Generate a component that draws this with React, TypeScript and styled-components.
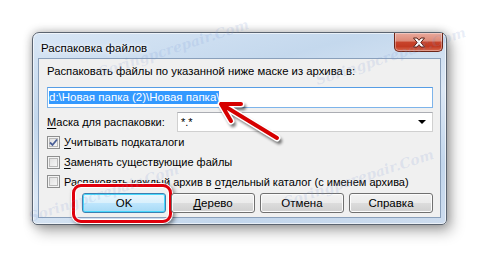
import React from 'react';
import styled, { createGlobalStyle } from 'styled-components';

const Global = createGlobalStyle`
  html, body { margin: 0; padding: 0; background: #ffffff; }
  body {
    width: 480px; height: 258px; overflow: hidden;
    font-family: "Liberation Sans", Arial, sans-serif;
    font-size: 11px; color: #000;
  }
`;

const Stage = styled.div`
  position: relative;
  width: 480px;
  height: 258px;
  box-sizing: border-box;
  padding: 32px 33px 33px 32px;
  overflow: hidden;
`;

const Window = styled.div`
  position: relative;
  width: 415px;
  height: 193px;
  box-sizing: border-box;
  display: flex;
  flex-direction: column;
  border: 1px solid #5b6470;
  border-radius: 7px 7px 5px 5px;
  background: linear-gradient(165deg, #d8e6f5 0%, #c4d8ed 30%, #dce8f5 55%, #c2d6ec 80%, #cddcee 100%);
  box-shadow: 0 0 10px rgba(0, 0, 0, 0.3), 5px 7px 14px rgba(0, 0, 0, 0.28),
    inset 0 0 0 1px rgba(255, 255, 255, 0.6);
`;

const TitleBar = styled.div`
  height: 25px;
  display: flex;
  align-items: flex-start;
  padding: 0 3px 0 8px;
`;

const Title = styled.div`
  flex: 1;
  min-width: 0;
  padding-top: 8px;
  font-size: 11.5px;
  line-height: 15px;
  color: #000;
  text-shadow: 0 0 6px rgba(255, 255, 255, 0.9), 0 0 3px rgba(255, 255, 255, 0.9);
`;

const CloseButton = styled.div`
  width: 49px;
  height: 19px;
  flex: none;
  box-sizing: border-box;
  display: flex;
  align-items: center;
  justify-content: center;
  border: 1px solid #6d2618;
  border-top: none;
  border-radius: 0 0 5px 5px;
  background: linear-gradient(180deg, #e9a99c 0%, #dc8a78 45%, #c8442c 50%, #c23a22 75%, #d76a4f 100%);
  box-shadow: inset 0 0 0 1px rgba(255, 255, 255, 0.35);
`;

const Frame = styled.div`
  flex: 1;
  min-height: 0;
  display: flex;
  padding: 0 5px 6px 5px;
`;

const Client = styled.div`
  position: relative;
  flex: 1;
  min-width: 0;
  box-sizing: border-box;
  display: flex;
  flex-direction: column;
  padding: 0 7px 0 8px;
  background: #f0f0f0;
  border: 1px solid #8aa0bb;
`;

const Label = styled.div`
  margin-top: 5px;
  height: 15px;
  line-height: 15px;
  font-size: 11.3px;
  white-space: nowrap;
`;

const TextBox = styled.div`
  margin-top: 8px;
  height: 21px;
  box-sizing: border-box;
  display: flex;
  align-items: center;
  padding: 0 1px;
  background: #fff;
  border: 1px solid #7eb4ea;
  border-top-color: #569de5;
`;

const Selected = styled.span`
  background: #3399ff;
  color: #fff;
  font-size: 11.5px;
  line-height: 13px;
  white-space: nowrap;
`;

const MaskRow = styled.div`
  margin-top: 4px;
  height: 20px;
  display: flex;
  align-items: center;
  justify-content: space-between;
`;

const Combo = styled.div`
  width: 256px;
  height: 20px;
  box-sizing: border-box;
  display: flex;
  align-items: center;
  justify-content: space-between;
  padding: 0 6px 0 3px;
  background: #fff;
  border: 1px solid #d0d0d0;
  border-top-color: #abadb3;
`;

const DropArrow = styled.div`
  width: 0;
  height: 0;
  border-left: 4px solid transparent;
  border-right: 4px solid transparent;
  border-top: 4px solid #000;
`;

const CheckRow = styled.div<{ $h: number }>`
  height: ${(p) => p.$h}px;
  display: flex;
  align-items: center;
  gap: 4px;
  white-space: nowrap;
`;

const Box = styled.div`
  width: 13px;
  height: 13px;
  flex: none;
  box-sizing: border-box;
  display: flex;
  align-items: center;
  justify-content: center;
  border: 1px solid #8e8f8f;
  box-shadow: inset 0 0 0 1px #f4f4f4, inset 0 0 0 2px #b9b9b9;
  background-image: linear-gradient(135deg, #dcdcdc 0%, #fbfbfb 100%);
`;

const U = styled.span`
  text-decoration: underline;
  text-underline-offset: 2px;
`;

const ButtonRow = styled.div`
  margin-top: 2px;
  display: flex;
  justify-content: flex-end;
  gap: 5px;
`;

const Button = styled.div<{ $default?: boolean }>`
  position: relative;
  width: 84px;
  height: 20px;
  flex: none;
  box-sizing: border-box;
  display: flex;
  align-items: center;
  justify-content: center;
  font-size: 11.5px;
  border-radius: 3px;
  border: 1px solid ${(p) => (p.$default ? '#3c7fb1' : '#707070')};
  background: ${(p) =>
    p.$default
      ? 'linear-gradient(180deg, #eaf6fd 0%, #d9f0fc 50%, #bee6fd 50%, #a7d9f5 100%)'
      : 'linear-gradient(180deg, #f2f2f2 0%, #ebebeb 50%, #dddddd 50%, #cfcfcf 100%)'};
  box-shadow: inset 0 0 0 1px ${(p) => (p.$default ? '#48d7fb' : '#fcfcfc')};
`;

const Highlight = styled.div`
  position: absolute;
  left: -11px;
  top: -10px;
  right: -7px;
  bottom: -11px;
  border: 3px solid #e0000c;
  border-radius: 9px;
  box-shadow: 0 0 0 1px #fff, inset 0 0 0 1px #fff, 2px 2px 4px 1px rgba(0, 0, 0, 0.45);
  pointer-events: none;
`;

const ArrowSvg = styled.svg`
  position: absolute;
  left: 200px;
  top: 90px;
  overflow: visible;
`;

const Watermark = styled.div`
  position: absolute;
  font-family: "DejaVu Serif", serif;
  font-style: italic;
  font-weight: bold;
  font-size: 14px;
  color: rgba(120, 150, 210, 0.16);
  transform: rotate(-18deg);
  white-space: nowrap;
  pointer-events: none;
`;

const Check = () => (
  <svg width="9" height="9" viewBox="0 0 9 9">
    <path d="M1 4.5 L3.5 7 L8 1.5" fill="none" stroke="#4a5f97" strokeWidth="1.8" />
  </svg>
);

const CloseX = () => (
  <svg width="14" height="11" viewBox="0 0 14 11">
    <path
      d="M1.5 1 L5 1 L7 3.3 L9 1 L12.5 1 L8.8 5.5 L12.5 10 L9 10 L7 7.7 L5 10 L1.5 10 L5.2 5.5 Z"
      fill="#ffffff"
      stroke="#5a2016"
      strokeWidth="1"
      strokeLinejoin="round"
    />
  </svg>
);

const arrowPath = 'M277 138 L221 104 M241 104 L221 104 L231 121';

export default function App() {
  return (
    <>
      <Global />
      <Stage>
        <Window>
          <TitleBar>
            <Title>Распаковка файлов</Title>
            <CloseButton>
              <CloseX />
            </CloseButton>
          </TitleBar>
          <Frame>
            <Client>
              <Label>Распаковать файлы по указанной ниже маске из архива в:</Label>
              <TextBox>
                <Selected>d:\Новая папка (2)\Новая папка\</Selected>
              </TextBox>
              <MaskRow>
                <span>
                  <U>М</U>аска для распаковки:
                </span>
                <Combo>
                  <span>*.*</span>
                  <DropArrow />
                </Combo>
              </MaskRow>
              <CheckRow $h={20}>
                <Box>
                  <Check />
                </Box>
                <span>
                  <U>У</U>читывать подкаталоги
                </span>
              </CheckRow>
              <CheckRow $h={20}>
                <Box />
                <span>
                  <U>З</U>аменять существующие файлы
                </span>
              </CheckRow>
              <CheckRow $h={19}>
                <Box />
                <span>
                  Распаковать каждый архив в <U>о</U>тдельный каталог (с именем архива)
                </span>
              </CheckRow>
              <ButtonRow>
                <Button $default>
                  OK
                  <Highlight />
                </Button>
                <Button>
                  <span>
                    <U>Д</U>ерево
                  </span>
                </Button>
                <Button>Отмена</Button>
                <Button>Справка</Button>
              </ButtonRow>
            </Client>
          </Frame>
        </Window>
        <ArrowSvg width="90" height="60" viewBox="200 90 90 60">
          <defs>
            <filter id="sh" x="-30%" y="-30%" width="160%" height="160%">
              <feGaussianBlur stdDeviation="1.5" />
            </filter>
          </defs>
          <g transform="translate(2,3)" filter="url(#sh)" opacity="0.55">
            <path d={arrowPath} fill="none" stroke="#000" strokeWidth="6" strokeLinecap="round" strokeLinejoin="round" />
          </g>
          <path d={arrowPath} fill="none" stroke="#ffffff" strokeWidth="7" strokeLinecap="round" strokeLinejoin="round" />
          <path d={arrowPath} fill="none" stroke="#d60000" strokeWidth="4" strokeLinecap="round" strokeLinejoin="round" />
        </ArrowSvg>
        <Watermark style={{ left: 95, top: 40 }}>Soringpcrepair.Com</Watermark>
        <Watermark style={{ left: 312, top: 48 }}>Soringpcrepair.Com</Watermark>
        <Watermark style={{ left: 25, top: 185 }}>Soringpcrepair.Com</Watermark>
        <Watermark style={{ left: 280, top: 170 }}>Soringpcrepair.Com</Watermark>
      </Stage>
    </>
  );
}
